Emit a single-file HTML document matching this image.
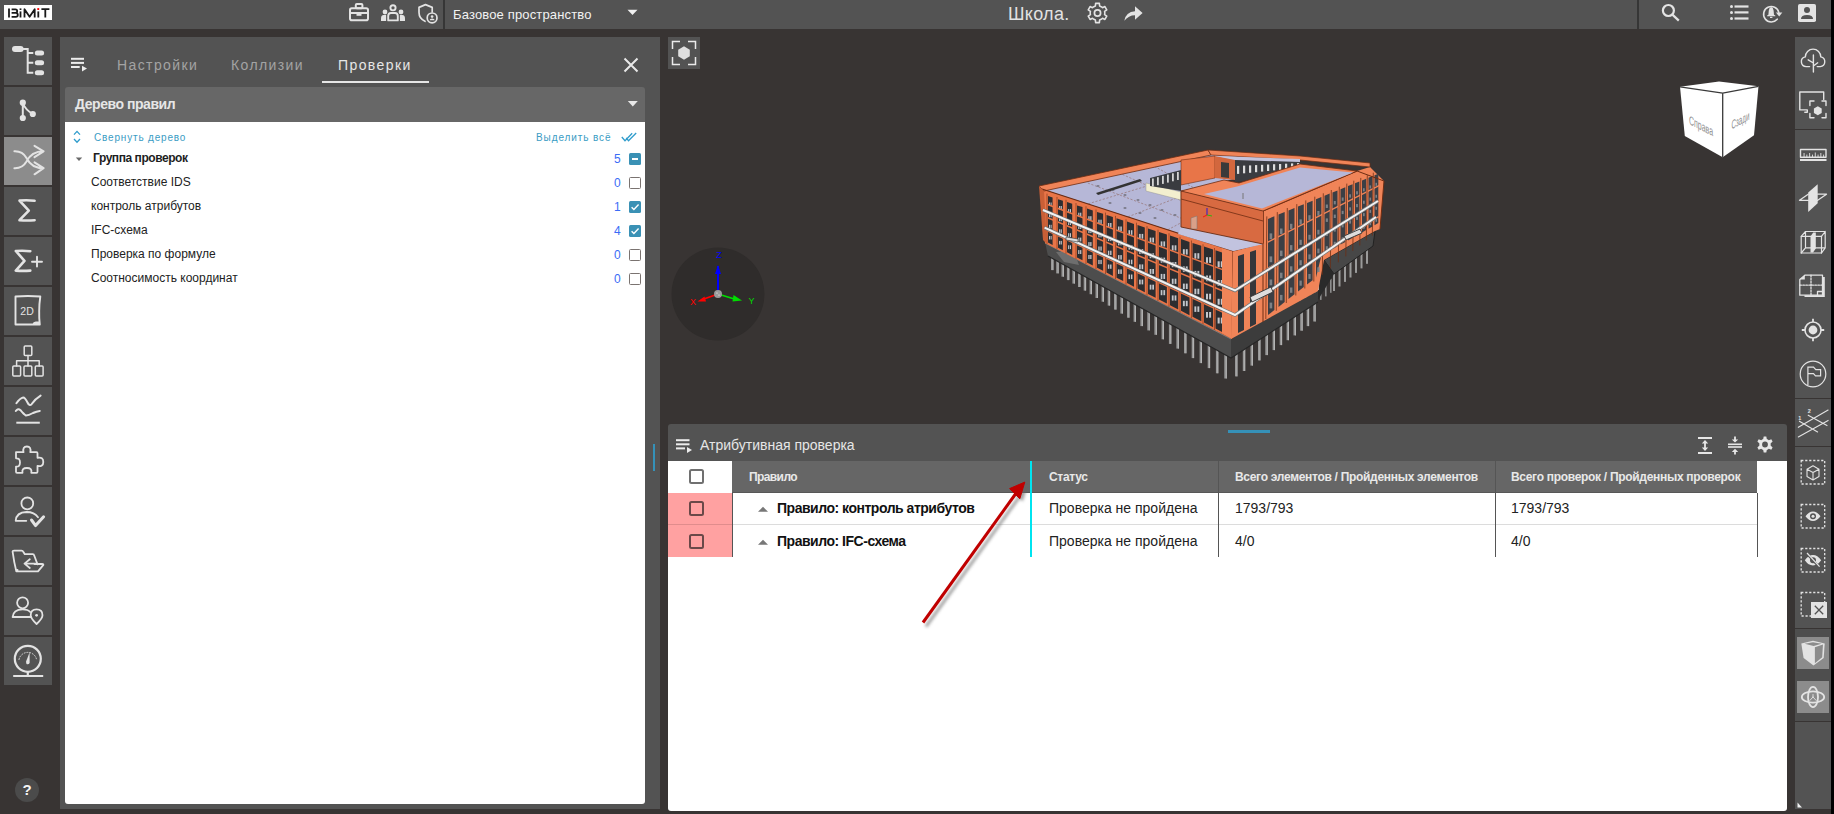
<!DOCTYPE html>
<html><head><meta charset="utf-8">
<style>
*{box-sizing:border-box;margin:0;padding:0}
html,body{width:1834px;height:814px;overflow:hidden;background:#383433;font-family:"Liberation Sans",sans-serif}
.a{position:absolute}
.t{position:absolute;white-space:nowrap}
svg.a{overflow:visible}
#top{left:0;top:0;width:1831px;height:29px;background:#535353}
#rstrip{left:1831px;top:0;width:3px;height:814px;background:#000}
.sb{position:absolute;left:4px;width:48px;height:48px;background:#535353}
.sb svg{position:absolute;left:0;top:0;overflow:visible}
.rs{position:absolute;left:1795px;width:36px;background:#535353}
.ic{fill:none;stroke:#e3e3e3;stroke-linecap:round;stroke-linejoin:round}
.tr{left:91px;font-size:12px;line-height:12px;color:#222}
.num{left:614px;font-size:12px;line-height:12px;color:#3b6cf6}
.cb{position:absolute;left:629px;width:12px;height:12px;border:1.5px solid #7a7370;border-radius:1.5px;background:#fff}
.cbc{position:absolute;left:629px;width:12px;height:12px;border-radius:1.5px;background:#3a91b5}
.th{top:471px;font-size:12px;line-height:12px;font-weight:bold;color:#e8e8e8;letter-spacing:-0.3px}
.td{font-size:14px;line-height:14px;color:#222}
.tdb{font-size:14px;line-height:14px;color:#111;font-weight:bold;letter-spacing:-0.48px}
.tcb{position:absolute;left:689px;width:15px;height:15px;border:2px solid #707070;border-radius:2.5px}
.dash{position:absolute;left:1801px;width:24px;height:24px;border:2px dotted #e0e0e0}
</style></head><body>
<!-- TOP BAR -->
<div id="top" class="a"></div>
<div id="rstrip" class="a"></div>
<div class="a" style="left:4px;top:5px;width:48px;height:15px;background:#fff"></div>
<svg class="a" style="left:4px;top:5px" width="48" height="15" viewBox="0 0 48 15">
 <g fill="none" stroke="#1a1a1a" stroke-width="1.8" stroke-linejoin="round">
  <path d="M5 3.5V12.5"/>
  <path d="M7.6 4.3H11.4Q13.2 4.3 13.2 6.1Q13.2 7.9 11.4 7.9H8M7.6 7.9H11.8Q13.8 7.9 13.8 10Q13.8 11.9 11.8 11.9H7.6"/>
  <path d="M16.5 6.4V12.5"/>
  <path d="M20.5 12.5V4.2L25.6 11.8L30.7 4.2V12.5"/>
  <path d="M34.3 6.4V12.5"/>
  <path d="M37.4 4.2H45.4M41.3 4.2V12.5"/>
 </g>
 <rect x="15.6" y="3.4" width="1.8" height="1.6" fill="#1a1a1a"/>
 <rect x="33.3" y="3.1" width="1.9" height="1.9" fill="#ff0000"/>
</svg>
<div class="a" style="left:443px;top:0;width:1.6px;height:29px;background:#363636"></div>
<div class="a" style="left:1637px;top:0;width:1.6px;height:29px;background:#363636"></div>
<div class="t" style="left:453px;top:8px;font-size:13px;line-height:13px;color:#f2f2f2;letter-spacing:0.15px">Базовое пространство</div>
<svg class="a" style="left:627px;top:9px" width="12" height="7"><path d="M0.5 0.8H10.5L5.5 6Z" fill="#f0f0f0"/></svg>
<div class="t" style="left:1008px;top:4.8px;font-size:18px;line-height:18px;color:#e2e2e2;letter-spacing:0.3px">Школа.</div>
<!-- top icons -->
<svg class="a" style="left:340px;top:0" width="110" height="29" viewBox="0 0 110 29">
 <g class="ic" stroke-width="2">
  <rect x="10" y="8.2" width="18" height="12" rx="1.8"/>
  <rect x="15.8" y="4" width="6.6" height="4.2" rx="1"/>
  <path d="M10 12.9H28"/>
 </g>
 <rect x="16.5" y="12.5" width="5" height="3.3" fill="#e3e3e3"/>
 <g fill="#e3e3e3">
  <circle cx="45" cy="12" r="2.4"/>
  <circle cx="61" cy="12" r="2.4"/>
  <path d="M41 21V18.5Q41 15.3 43.6 15.1H46.1V21Z"/>
  <path d="M65 21V18.5Q65 15.3 62.4 15.1H59.9V21Z"/>
 </g>
 <g class="ic" stroke-width="1.9">
  <circle cx="53" cy="7.8" r="2.6"/>
  <path d="M48.2 20.4V16Q48.2 13 51 13H55Q57.8 13 57.8 16V20.4Z"/>
 </g>
 <g class="ic" stroke-width="1.7">
  <path d="M85.5 4.6L79 7.4V12.6Q79 18.6 85 21.3M85.5 4.6L92.2 7.4V12"/>
  <circle cx="92.1" cy="17.9" r="4.9"/>
 </g>
 <g fill="#e3e3e3">
  <circle cx="92.1" cy="16.6" r="1.3"/>
  <path d="M89.6 20.3Q89.6 18.6 92.1 18.6Q94.6 18.6 94.6 20.3Z"/>
 </g>
</svg>
<svg class="a" style="left:1080px;top:0" width="70" height="29" viewBox="0 0 70 29">
 <path class="ic" stroke-width="1.6" d="M13.85 6.68 L15.37 6.02 L15.63 3.38 L19.37 3.38 L19.63 6.02 L21.15 6.68 L22.48 7.66 L24.90 6.57 L26.77 9.81 L24.61 11.36 L24.80 13.00 L24.61 14.64 L26.77 16.19 L24.90 19.43 L22.48 18.34 L21.15 19.32 L19.63 19.98 L19.37 22.62 L15.63 22.62 L15.37 19.98 L13.85 19.32 L12.52 18.34 L10.10 19.43 L8.23 16.19 L10.39 14.64 L10.20 13.00 L10.39 11.36 L8.23 9.81 L10.10 6.57 L12.52 7.66Z"/>
 <circle class="ic" cx="17.5" cy="13" r="3.1" stroke-width="1.7"/>
 <path fill="#e3e3e3" d="M44.3 20.8Q45.8 11.8 55 11.2V6.2L62.6 13L55 19.8V15.2Q48.5 15.2 44.3 20.8Z"/>
</svg>
<svg class="a" style="left:1630px;top:0" width="200" height="29" viewBox="0 0 200 29">
 <g class="ic" stroke-width="2.2">
  <circle cx="38.4" cy="10.5" r="5.5"/>
  <path d="M42.4 14.6L48.8 20.6" stroke-linecap="butt"/>
 </g>
 <g fill="#e3e3e3">
  <circle cx="101.5" cy="6.5" r="1.5"/><circle cx="101.5" cy="12.4" r="1.5"/><circle cx="101.5" cy="18.5" r="1.5"/>
  <rect x="104.5" y="5.4" width="14" height="2.2"/><rect x="104.5" y="11.3" width="14" height="2.2"/><rect x="104.5" y="17.4" width="14" height="2.2"/>
 </g>
 <path class="ic" stroke-width="1.6" d="M147.2 19.2A7.7 7.7 0 1 1 148.8 12.4"/>
 <path fill="#e3e3e3" d="M145.9 12.6H152.3L149.2 16.4Z"/>
 <path fill="#e3e3e3" d="M141.2 7.1Q143.2 7.6 143.6 10.5L144 14.7L145.3 15.5V16.2H137.1V15.5L138.4 14.7L138.8 10.5Q139.2 7.6 141.2 7.1Z"/>
 <rect x="140" y="16.8" width="2.4" height="1.2" fill="#e3e3e3"/>
 <rect x="168" y="4" width="18" height="18" rx="1.8" fill="#e3e3e3"/>
 <circle cx="177" cy="10" r="3" fill="#535353"/>
 <path fill="#535353" d="M171 19Q171 15 177 15Q183 15 183 19Z"/>
</svg>
<!-- LEFT SIDEBAR -->
<div class="sb" style="top:37px"><svg width="48" height="48">
 <g fill="#e3e3e3"><rect x="8" y="9" width="11.6" height="6" rx="3"/><rect x="30.8" y="13.4" width="9.3" height="5" rx="2.5"/><rect x="30.8" y="23.3" width="9.3" height="5" rx="2.5"/><rect x="30.8" y="33.3" width="9.3" height="5" rx="2.5"/></g>
 <path class="ic" style="stroke-linecap:butt;stroke-linejoin:miter" stroke-width="2"   d="M18 12H23.7V35.8H29.3M23.7 15.9H29.3M23.7 25.8H29.3"/>
</svg></div>
<div class="sb" style="top:87px"><svg width="48" height="48">
 <g fill="#e3e3e3"><circle cx="18.8" cy="15.7" r="3.1"/><circle cx="18.8" cy="31" r="3.1"/><circle cx="28.8" cy="27" r="3.1"/></g>
 <path class="ic" stroke-width="2" d="M18.8 16V31M18.8 16Q21.5 23 28.8 27"/>
</svg></div>
<div class="sb" style="top:137px;background:#8c8c8c"><svg width="48" height="48">
 <path class="ic" stroke-width="2" d="M10.4 14.3Q18.5 14 22.5 21Q27.5 31.2 39.6 31.2M10.4 31.2Q18.5 31.5 22.5 24.5Q27.5 14.3 39.6 14.3M30.5 8.8L39.6 14.3L30.5 20.2M30.5 25.3L39.6 31.2L30.5 37.3"/>
</svg></div>
<div class="sb" style="top:187px"><svg width="48" height="48">
 <path class="ic" stroke-width="2.6" d="M30.6 13.8Q23 12.8 15.5 13.6L24.8 23.6L15.5 33.2Q23 33.8 30.6 33.2"/>
</svg></div>
<div class="sb" style="top:237px"><svg width="48" height="48">
 <path class="ic" stroke-width="2.6" d="M26.3 14.2Q19 13.3 11.8 14L20.5 23.8L11.8 33.6Q19 34.2 26.3 33.6"/>
 <path class="ic" stroke-width="1.9" d="M28 24.7H38M33 19.8V29.5"/>
</svg></div>
<div class="sb" style="top:287px"><svg width="48" height="48">
 <path class="ic" stroke-width="1.9" d="M11.5 9.5Q24 8.6 36.3 9.5Q35.2 17 35.2 24Q35 31 35.8 37.5H11.5Z"/>
 <path fill="#e3e3e3" d="M28.5 37.5Q29 34.8 31.8 34.6H35.5V37.5Z"/>
 <text x="23.2" y="27.8" text-anchor="middle" font-family="Liberation Sans" font-size="10.5" fill="#e3e3e3" letter-spacing="0.3">2D</text>
</svg></div>
<div class="sb" style="top:337px"><svg width="48" height="48">
 <g class="ic" stroke-width="1.5"><rect x="20.2" y="9" width="7.6" height="9.5" rx="1"/><rect x="8.8" y="29" width="7.8" height="10" rx="1"/><rect x="20" y="29" width="7.8" height="10" rx="1"/><rect x="31.3" y="29" width="7.8" height="10" rx="1"/>
 <path d="M24 18.5V29M12.6 29V23.8H35.2V29"/></g>
</svg></div>
<div class="sb" style="top:387px"><svg width="48" height="48">
 <path class="ic" stroke-width="2" d="M12.4 16.2Q16 11 19.2 10.4Q21 10.3 23.5 15.5Q25.5 19.5 27.5 17.3Q31 12 36.6 8.6"/>
 <path class="ic" stroke-width="2" d="M11.8 24Q14 20.8 16.5 23.2Q20 27.5 22 28.6Q24.5 28.5 29 26Q32.5 24.3 35.8 23.9"/>
 <path class="ic" style="stroke-linecap:butt" stroke-width="2"  d="M12.3 35.7H35.8"/>
</svg></div>
<div class="sb" style="top:437px"><svg width="48" height="48">
 <path class="ic" stroke-width="1.8" d="M12 15.2H19.5Q18.3 9.5 22.9 9.5Q27.5 9.5 26.3 15.2H32.5Q33.5 15.2 33.5 16.2V20.8Q39.3 19.7 39.3 24.9Q39.3 30 33.5 29V34.8Q33.5 35.8 32.5 35.8H27.3Q28.3 31 22.9 31Q17.5 31 18.5 35.8H13Q12 35.8 12 34.8V29.6Q16 30 16 25.5Q16 21 12 21.3V16.2Q12 15.2 12 15.2Z"/>
</svg></div>
<div class="sb" style="top:487px"><svg width="48" height="48">
 <circle class="ic" cx="23.3" cy="16.4" r="5.9" stroke-width="1.8"/>
 <path class="ic" stroke-width="1.8" d="M22.3 33.8H11.7Q12.3 25.3 22.5 25Q30.5 25 34 30.2"/>
 <path class="ic" stroke-width="3" d="M27.5 33L31.6 38.6L39.6 29.8"/>
</svg></div>
<div class="sb" style="top:537px"><svg width="48" height="48">
 <path class="ic" stroke-width="1.8" d="M12.3 34.3Q10 25 8.6 14.6Q8.6 13.7 10 13.7H17.5Q18.8 13.7 19.6 15.3L20.8 17.2H28.7Q30 17.2 30.3 18.8L33.5 27.3M12.3 34.3H34M12.3 34.3Q13.2 34.3 13.5 33M34 34.3L39.4 27.8Q39.4 27 38.3 27H30.5"/>
 <path class="ic" stroke-width="1.8" d="M33.6 26.6H20.5M25.8 22.3L20.5 26.6L25.8 31"/>
</svg></div>
<div class="sb" style="top:587px"><svg width="48" height="48">
 <circle class="ic" cx="18.6" cy="15.8" r="5.5" stroke-width="1.8"/>
 <path class="ic" stroke-width="1.8" d="M27 30H8.6Q9.2 22.5 18.6 22.3Q24 22.3 26.2 25"/>
 <path class="ic" stroke-width="1.8" d="M32.6 37Q26.7 31.5 26.7 28.3Q26.7 22.4 32.6 22.4Q38.5 22.4 38.5 28.3Q38.5 31.5 32.6 37Z"/>
 <circle cx="32.6" cy="28.3" r="1.4" fill="#e3e3e3"/>
</svg></div>
<div class="sb" style="top:637px"><svg width="48" height="48">
 <circle class="ic" cx="23.8" cy="21.8" r="13" stroke-width="2.2"/>
 <path class="ic" style="stroke-linecap:butt" stroke-width="2.2"  d="M9.2 39H39.2M23.8 34.8V39"/>
 <path fill="#e3e3e3" d="M22 24.8L25.6 15.3L25.6 26Q24.5 28 22.5 27Z"/>
 <path class="ic" stroke-width="0.9" stroke-dasharray="1 1.8" d="M15 22.5A9 9 0 0 1 32.6 22.5"/>
</svg></div>
<div class="a" style="left:15px;top:778px;width:24px;height:24px;border-radius:50%;background:#4b4b4b"></div>
<div class="t" style="left:15px;top:782px;width:24px;text-align:center;font-size:15px;line-height:15px;font-weight:bold;color:#f4f4f4">?</div>
<!-- LEFT PANEL -->
<div class="a" style="left:60px;top:37px;width:600px;height:772px;background:#535353"></div>
<div class="a" style="left:65px;top:87px;width:580px;height:35px;background:#676767;border-radius:3px 3px 0 0"></div>
<div class="a" style="left:65px;top:122px;width:580px;height:682px;background:#fff;border-radius:0 0 3px 3px"></div>
<svg class="a" style="left:60px;top:40px" width="40" height="40">
 <g fill="#ececec"><rect x="11" y="17.8" width="13" height="2"/><rect x="11" y="21.9" width="13" height="2"/><rect x="11" y="26" width="8.7" height="2"/><path d="M22 25.7L27 28.6L22 31.6Z"/></g>
</svg>
<div class="t" style="left:117px;top:58px;font-size:14px;line-height:14px;letter-spacing:1.4px;color:#a3a3a3">Настройки</div>
<div class="t" style="left:231px;top:58px;font-size:14px;line-height:14px;letter-spacing:1.4px;color:#a3a3a3">Коллизии</div>
<div class="t" style="left:338px;top:58px;font-size:14px;line-height:14px;letter-spacing:1.4px;color:#e6e6e6">Проверки</div>
<div class="a" style="left:322px;top:81px;width:107px;height:2px;background:#e6e6e6"></div>
<svg class="a" style="left:620px;top:54px" width="22" height="22"><path d="M4.5 4.5L17.5 17.5M17.5 4.5L4.5 17.5" stroke="#e8e8e8" stroke-width="2"/></svg>
<div class="t" style="left:75px;top:97px;font-size:14px;line-height:14px;font-weight:bold;color:#e6e6e6;letter-spacing:-0.45px">Дерево правил</div>
<svg class="a" style="left:627px;top:100px" width="12" height="8"><path d="M0.8 1H10.8L5.8 6.5Z" fill="#e8e8e8"/></svg>
<svg class="a" style="left:70px;top:128px" width="14" height="18"><path d="M4 6.6L7 3.4L10 6.6M4 11L7 14.3L10 11" fill="none" stroke="#2f9ccc" stroke-width="1.3"/></svg>
<div class="t" style="left:94px;top:133px;font-size:10px;line-height:10px;letter-spacing:0.82px;color:#3a9cc4">Свернуть дерево</div>
<div class="t" style="left:536px;top:133px;font-size:10px;line-height:10px;letter-spacing:0.9px;color:#3a9cc4">Выделить всё</div>
<svg class="a" style="left:619px;top:130px" width="22" height="14"><path d="M2.8 7L6 10.7L13.2 3.2M7.2 7.9L9.5 10.7L17.2 3" fill="none" stroke="#2f9ccc" stroke-width="1.3"/></svg>
<svg class="a" style="left:74px;top:155px" width="10" height="8"><path d="M1.8 2.5H8.2L5 6Z" fill="#6a6a6a"/></svg>
<div class="t tr" style="left:93px;top:152px;font-weight:bold;letter-spacing:-0.44px;color:#1e1e1e">Группа проверок</div>
<div class="t tr" style="top:176px">Соответствие IDS</div>
<div class="t tr" style="top:200px">контроль атрибутов</div>
<div class="t tr" style="top:224px">IFC-схема</div>
<div class="t tr" style="top:248px">Проверка по формуле</div>
<div class="t tr" style="top:272px">Соотносимость координат</div>
<div class="t num" style="top:153px">5</div>
<div class="t num" style="top:177px">0</div>
<div class="t num" style="top:201px">1</div>
<div class="t num" style="top:225px">4</div>
<div class="t num" style="top:249px">0</div>
<div class="t num" style="top:273px">0</div>
<div class="cbc" style="top:153px"><div class="a" style="left:3px;top:5.3px;width:6px;height:1.6px;background:#fff"></div></div>
<div class="cb" style="top:177px"></div>
<div class="cbc" style="top:201px"><svg class="a" style="left:0;top:0" width="12" height="12"><path d="M2.6 6.2L4.9 8.5L9.6 3.6" fill="none" stroke="#fff" stroke-width="1.4"/></svg></div>
<div class="cbc" style="top:225px"><svg class="a" style="left:0;top:0" width="12" height="12"><path d="M2.6 6.2L4.9 8.5L9.6 3.6" fill="none" stroke="#fff" stroke-width="1.4"/></svg></div>
<div class="cb" style="top:249px"></div>
<div class="cb" style="top:273px"></div>
<div class="a" style="left:653px;top:444px;width:2px;height:27px;background:#3591b8"></div>
<!-- BOTTOM PANEL -->
<div class="a" style="left:668px;top:424px;width:1119px;height:37px;background:#535353;border-radius:3px 3px 0 0"></div>
<div class="a" style="left:668px;top:461px;width:1119px;height:350px;background:#fff;border-radius:0 0 3px 3px"></div>
<div class="a" style="left:1228px;top:430px;width:42px;height:3px;background:#3591b8"></div>
<svg class="a" style="left:668px;top:430px" width="30" height="26">
 <g fill="#ececec"><rect x="8" y="9.2" width="13.5" height="2"/><rect x="8" y="13.3" width="13.5" height="2"/><rect x="8" y="17.4" width="9" height="2"/><path d="M19 17L24 20L19 23Z"/></g>
</svg>
<div class="t" style="left:700px;top:438px;font-size:14px;line-height:14px;color:#e6e6e6">Атрибутивная проверка</div>
<svg class="a" style="left:1690px;top:430px" width="90" height="30">
 <g fill="#e6e6e6">
  <rect x="8" y="7" width="14" height="2"/><rect x="8" y="22" width="14" height="2"/>
  <path d="M15 10L18.2 13.4H15.9V17.6H18.2L15 21L11.8 17.6H14.1V13.4H11.8Z"/>
  <rect x="38" y="13.5" width="14" height="1.6"/><rect x="38" y="16.2" width="14" height="1.6"/>
  <path d="M45 12.6L41.8 9.4H44.1V6.6H45.9V9.4H48.2Z"/><path d="M45 18.7L41.8 21.9H44.1V24.6H45.9V21.9H48.2Z"/>
 </g>
 <path fill="#e6e6e6" fill-rule="evenodd" d="M73.7 6.5H76.3L76.8 9.1Q77.9 9.5 78.8 10.2L81.3 9.3L82.6 11.6L80.6 13.4Q80.8 14.5 80.6 15.6L82.6 17.4L81.3 19.7L78.8 18.8Q77.9 19.5 76.8 19.9L76.3 22.5H73.7L73.2 19.9Q72.1 19.5 71.2 18.8L68.7 19.7L67.4 17.4L69.4 15.6Q69.2 14.5 69.4 13.4L67.4 11.6L68.7 9.3L71.2 10.2Q72.1 9.5 73.2 9.1ZM75 11.6A2.9 2.9 0 1 0 75 17.4A2.9 2.9 0 1 0 75 11.6Z"/>
</svg>
<!-- table -->
<div class="a" style="left:732px;top:461px;width:1025px;height:32px;background:#666"></div>
<div class="a" style="left:732px;top:492px;width:1025px;height:1px;background:#575757"></div>
<div class="a" style="left:668px;top:493px;width:64px;height:64px;background:#ffa1a1"></div>
<div class="a" style="left:668px;top:524px;width:64px;height:1px;background:#e08c8c"></div>
<div class="a" style="left:732px;top:524px;width:1025px;height:1px;background:#dcdcdc"></div>
<div class="a" style="left:732px;top:493px;width:1px;height:64px;background:#555"></div>
<div class="a" style="left:1218px;top:461px;width:1px;height:96px;background:#555"></div>
<div class="a" style="left:1495px;top:461px;width:1px;height:96px;background:#555"></div>
<div class="a" style="left:1757px;top:493px;width:1px;height:64px;background:#555"></div>
<div class="a" style="left:1030px;top:461px;width:2.4px;height:96px;background:#00e4f0"></div>
<div class="tcb" style="top:469px"></div>
<div class="tcb" style="top:501px;border-color:#6a4848"></div>
<div class="tcb" style="top:534px;border-color:#6a4848"></div>
<div class="t th" style="left:749px;letter-spacing:-0.6px">Правило</div>
<div class="t th" style="left:1049px">Статус</div>
<div class="t th" style="left:1235px">Всего элементов / Пройденных элементов</div>
<div class="t th" style="left:1511px">Всего проверок / Пройденных проверок</div>
<svg class="a" style="left:756px;top:504px" width="14" height="9"><path d="M2 7.8H12L7 2.8Z" fill="#777"/></svg>
<svg class="a" style="left:756px;top:537px" width="14" height="9"><path d="M2 7.8H12L7 2.8Z" fill="#777"/></svg>
<div class="t tdb" style="left:777px;top:501px">Правило: контроль атрибутов</div>
<div class="t tdb" style="left:777px;top:534px">Правило: IFC-схема</div>
<div class="t td" style="left:1049px;top:501px">Проверка не пройдена</div>
<div class="t td" style="left:1049px;top:534px">Проверка не пройдена</div>
<div class="t td" style="left:1235px;top:501px">1793/793</div>
<div class="t td" style="left:1235px;top:534px">4/0</div>
<div class="t td" style="left:1511px;top:501px">1793/793</div>
<div class="t td" style="left:1511px;top:534px">4/0</div>
<!-- arrow annotation -->
<svg class="a" style="left:900px;top:470px" width="150" height="170">
 <defs><filter id="sh" x="-50%" y="-50%" width="200%" height="200%"><feGaussianBlur stdDeviation="1.8"/></filter></defs>
 <g transform="translate(3,4)" opacity="0.6" filter="url(#sh)">
  <path d="M23 152.5L115.5 24" stroke="#666" stroke-width="3"/>
  <path d="M124.8 12.1L110.9 19.4L119.8 27.6Z" fill="#666"/>
 </g>
 <path d="M23 152.5L115.5 24" stroke="#c00000" stroke-width="3"/>
 <path d="M124.8 12.1L109.6 18.6L119.8 28.8Z" fill="#c00000" stroke="#c00000" stroke-width="1"/>
</svg>
<!-- RIGHT SIDEBAR -->
<div class="rs" style="top:37px;height:92px"></div>
<div class="rs" style="top:130px;height:268px"></div>
<div class="rs" style="top:399px;height:47px"></div>
<div class="rs" style="top:447px;height:181px"></div>
<div class="rs" style="top:629px;height:92px;background:#4e4e4e"></div>
<div class="rs" style="top:722px;height:87px"></div>
<div class="a" style="left:1797px;top:637px;width:32px;height:32px;background:#8c8c8c"></div>
<div class="a" style="left:1797px;top:681px;width:32px;height:32px;background:#8c8c8c"></div>
<svg class="a" style="left:1795px;top:37px" width="36" height="772" viewBox="0 0 36 772">
 <g class="ic" stroke-width="1.4">
  <!-- cloud tree -->
  <path d="M14.6 29.6H11.2A4.9 4.9 0 0 1 10.3 19.9A7.6 7.6 0 0 1 25.8 19.9A4.9 4.9 0 0 1 25.2 29.6H22.2"/>
  <path d="M18.4 18V35M18.4 26L13.2 22.8M18.4 29L22.7 25.8"/>
  <!-- screen focus -->
  <path d="M12.3 72.9H4.8V55H28.7V62.5M12.3 72.9V75.2H9.8"/>
  <path d="M14.9 68.5V64H19M27 64H31V68.5M14.9 76.5V80.8H19M27 80.8H31V76.5"/>
 </g>
 <path fill="#e3e3e3" d="M22.8 69.3L26.7 71.5V76L22.8 78.2L18.9 76V71.5Z"/>
 <!-- ruler -->
 <g class="ic" stroke-width="1.4"><rect x="5.5" y="112.5" width="25.5" height="7.7"/></g>
 <g fill="#e3e3e3"><rect x="5" y="122" width="26.5" height="2"/>
  <rect x="8.6" y="116" width="0.9" height="4"/><rect x="11.4" y="117.6" width="0.9" height="2.6"/><rect x="14.2" y="116" width="0.9" height="4"/><rect x="17" y="117.6" width="0.9" height="2.6"/><rect x="19.8" y="115.5" width="0.9" height="4.5"/><rect x="22.6" y="117.6" width="0.9" height="2.6"/><rect x="25.4" y="116" width="0.9" height="4"/><rect x="28.2" y="117.6" width="0.9" height="2.6"/></g>
 <!-- section plane -->
 <path fill="#e3e3e3" d="M13.2 155.6L22.7 147.2V166.3L13.2 175Z"/>
 <path class="ic" stroke-width="1.3" d="M4.5 163.3H13.2M22.7 157.2H31.5L22.7 163.3H4.5L13.2 157.2"/>
 <!-- section box -->
 <g class="ic" stroke-width="1.2">
  <path d="M6.2 199.3H26.5V216H6.2Z"/>
  <path d="M6.2 199.3L10.5 194.5H30.2V210.8L26.5 216M26.5 199.3L30.2 194.5M10.5 194.5V210.8H30.2M10.5 210.8L6.2 216"/>
 </g>
 <path fill="#e3e3e3" d="M15.5 199.5L18.2 195.5H20.8V211.5L18 215.5H15.5Z"/>
 <!-- floor plan -->
 <path fill="#e3e3e3" d="M27.5 240H29.8V260H9.5V258.2H27.5Z"/>
 <g class="ic" stroke-width="1.3">
  <path d="M7.5 240.2L9.8 238.2H27.5V258.2H4.8V242.5Z"/>
  <path d="M4.8 248.2H27.5M16 238.2V258.2" stroke-dasharray="1.6 1.4"/>
  <path d="M22.5 258.2V254.5H27.5"/>
 </g>
 <path fill="#e3e3e3" d="M4.8 242.5L9.8 238.2V242.5Z"/>
 <!-- target -->
 <circle class="ic" cx="18" cy="293" r="8" stroke-width="1.6"/>
 <circle cx="18" cy="293" r="4.4" fill="#e3e3e3"/>
 <path class="ic" style="stroke-linecap:butt" stroke-width="1.8"  d="M18 281.8V285M18 301V304.2M6.8 293H10M26 293H29.2"/>
 <!-- flag -->
 <circle class="ic" cx="18" cy="337" r="12.8" stroke-width="1.2"/>
 <path class="ic" style="stroke-linejoin:miter" stroke-width="1.2"  d="M12.9 348V330.2H18.5L20.8 332.6H25.6V338.8H20.5L18.5 336.6H12.9"/>
 <!-- grid 1 2 -->
 <path class="ic" stroke-width="1.1" d="M3.3 390.3L33.1 373.1M3.3 400L33.1 383.4M4.4 384.2L22.6 395M13.2 378.2L32 388.6"/>
 <text x="3.2" y="382.5" font-family="Liberation Sans" font-size="5.5" font-weight="bold" fill="#e3e3e3">1</text>
 <text x="12.8" y="376.3" font-family="Liberation Sans" font-size="5.5" font-weight="bold" fill="#e3e3e3">2</text>
 <!-- dashed boxes -->
 <g class="ic" style="stroke-linecap:butt;stroke-linejoin:miter" stroke-width="1.3" stroke-dasharray="2.2 1.8"  >
  <rect x="6.2" y="423.5" width="23.5" height="23.5"/>
  <rect x="6.2" y="467.5" width="23.5" height="23.5"/>
  <rect x="6.2" y="511.5" width="23.5" height="23.5"/>
  <rect x="6.2" y="555.5" width="23.5" height="23.5"/>
 </g>
 <path class="ic" stroke-width="1.1" d="M18 428.8L24 432.2V439.6L18 443L12 439.6V432.2ZM12 432.2L18 435.6L24 432.2M18 435.6V443"/>
 <path fill="#e3e3e3" fill-rule="evenodd" d="M10.5 479.3Q13.8 474.5 18 474.5Q22.2 474.5 25.5 479.3Q22.2 484 18 484Q13.8 484 10.5 479.3ZM18 476.3A3 3 0 1 0 18 482.3A3 3 0 1 0 18 476.3Z"/>
 <circle cx="18" cy="479.3" r="1.5" fill="#e3e3e3"/>
 <path fill="#e3e3e3" fill-rule="evenodd" d="M9.8 523.2Q13.5 518 18 518Q22.5 518 26.2 523.2Q22.5 528.4 18 528.4Q13.5 528.4 9.8 523.2ZM18 520.2A3 3 0 1 0 18 526.2A3 3 0 1 0 18 520.2Z"/>
 <path stroke="#535353" stroke-width="2.4" d="M12 516.8L24.6 530.5"/>
 <path stroke="#e3e3e3" stroke-width="1.2" d="M12 516L24.6 529.7"/>
 <rect x="16" y="565" width="16" height="16" fill="#e3e3e3"/>
 <path stroke="#535353" stroke-width="1.3" d="M19.8 568.8L28.2 577.2M28.2 568.8L19.8 577.2"/>
 <!-- active cube -->
 <path fill="#e3e3e3" d="M6.3 606.4L18 603.8L29.7 606.4L28.7 621L18.5 628.5L8.6 621Z"/>
 <path fill="#8c8c8c" d="M19.9 610.3L28 607.6L27.2 620.3L19.9 626.2Z"/>
 <path fill="#8c8c8c" d="M9.6 606.7L18 605.2L26.6 606.7L18.6 608.9Z"/>
 <!-- orbit -->
 <g class="ic" stroke-width="1.8">
  <ellipse cx="18" cy="660" rx="11.2" ry="5.6"/>
  <ellipse cx="18" cy="660" rx="5" ry="10.2"/>
 </g>
 <path class="ic" stroke-width="0.9" d="M18 660V657.5M18 660L14.8 663.5M18 660L21.2 663.5"/>
 <!-- resize mark -->
 <path fill="#f0f0f0" d="M2.5 765.5V770.5H7Z"/>
</svg>
<!-- VIEWER -->
<div class="a" style="left:668px;top:37px;width:32px;height:32px;background:#535353"></div>
<svg class="a" style="left:668px;top:37px" width="32" height="32">
 <path d="M4.5 12V4.5H12M20 4.5H27.5V12M4.5 20V27.5H12M20 27.5H27.5V20" fill="none" stroke="#eaeaea" stroke-width="1.5"/>
 <path d="M16 9.3L21.8 12.65V19.35L16 22.7L10.2 19.35V12.65Z" fill="#e0e0e0"/>
</svg>
<!-- axes gizmo -->
<svg class="a" style="left:660px;top:240px" width="120" height="110">
 <circle cx="58" cy="54" r="46.5" fill="#2f2c2b"/>
 <path d="M58 53V26" stroke="#0000ff" stroke-width="2"/>
 <path d="M58 25L55 34H61Z" fill="#0000ff"/>
 <path d="M58 54L41 60" stroke="#ff0000" stroke-width="1.8"/>
 <path d="M37.5 61.5L44.5 56.5L46 61.5Z" fill="#ff0000"/>
 <path d="M58 54L76 59.5" stroke="#00dd00" stroke-width="1.8"/>
 <path d="M82 60.5L73.5 55L72.5 61.5Z" fill="#00dd00"/>
 <circle cx="58" cy="54" r="4" fill="#9a9a9a"/>
 <circle cx="57" cy="53" r="0.6" fill="#fff"/><circle cx="59" cy="55" r="0.6" fill="#fff"/>
 <text x="56.3" y="18" font-family="Liberation Sans" font-size="9" fill="#0000ff">Z</text>
 <text x="30" y="64.5" font-family="Liberation Sans" font-size="9" fill="#ff0000">X</text>
 <text x="88.5" y="64" font-family="Liberation Sans" font-size="9" fill="#00dd00">Y</text>
</svg>
<!-- nav cube -->
<svg class="a" style="left:1670px;top:75px" width="100" height="90">
 <path d="M10 11.8L49 6.4L88.5 11.3L84 60.2L52.7 82.3L14.8 61Z" fill="#ffffff"/>
 <path d="M10 11.8L52.7 18.2L88.5 11.3M52.7 18.2V82.3" fill="none" stroke="#3a3a3a" stroke-width="1.3"/>
 <text x="0" y="0" transform="translate(19,49) skewY(27) scale(0.56,1)" font-family="Liberation Sans" font-size="12.5" fill="#8e8e8e">Справа</text>
 <text x="0" y="0" transform="translate(61.5,54.5) skewY(-29) scale(0.5,1)" font-family="Liberation Sans" font-size="12.5" fill="#8e8e8e">Сзади</text>
</svg>
<svg class="a" style="left:1000px;top:130px" width="420" height="270" viewBox="1000 130 420 270">
<rect x="1051.0" y="256.1" width="2.4" height="14.0" fill="#979797"/>
<rect x="1052.6" y="256.1" width="0.8" height="14.0" fill="#bcbcbc"/>
<rect x="1056.2" y="259.0" width="2.4" height="14.4" fill="#979797"/>
<rect x="1057.8" y="259.0" width="0.8" height="14.4" fill="#bcbcbc"/>
<rect x="1061.5" y="262.0" width="2.4" height="14.7" fill="#979797"/>
<rect x="1063.1" y="262.0" width="0.8" height="14.7" fill="#bcbcbc"/>
<rect x="1066.9" y="265.0" width="2.4" height="15.1" fill="#979797"/>
<rect x="1068.5" y="265.0" width="0.8" height="15.1" fill="#bcbcbc"/>
<rect x="1072.4" y="268.1" width="2.4" height="15.5" fill="#979797"/>
<rect x="1074.0" y="268.1" width="0.8" height="15.5" fill="#bcbcbc"/>
<rect x="1078.0" y="271.2" width="2.4" height="15.8" fill="#979797"/>
<rect x="1079.6" y="271.2" width="0.8" height="15.8" fill="#bcbcbc"/>
<rect x="1083.7" y="274.4" width="2.4" height="16.2" fill="#979797"/>
<rect x="1085.3" y="274.4" width="0.8" height="16.2" fill="#bcbcbc"/>
<rect x="1089.6" y="277.6" width="2.4" height="16.6" fill="#979797"/>
<rect x="1091.2" y="277.6" width="0.8" height="16.6" fill="#bcbcbc"/>
<rect x="1095.5" y="281.0" width="2.4" height="17.0" fill="#979797"/>
<rect x="1097.1" y="281.0" width="0.8" height="17.0" fill="#bcbcbc"/>
<rect x="1101.6" y="284.3" width="2.4" height="17.4" fill="#979797"/>
<rect x="1103.2" y="284.3" width="0.8" height="17.4" fill="#bcbcbc"/>
<rect x="1107.7" y="287.8" width="2.4" height="17.8" fill="#979797"/>
<rect x="1109.3" y="287.8" width="0.8" height="17.8" fill="#bcbcbc"/>
<rect x="1114.0" y="291.3" width="2.4" height="18.3" fill="#979797"/>
<rect x="1115.6" y="291.3" width="0.8" height="18.3" fill="#bcbcbc"/>
<rect x="1120.4" y="294.9" width="2.4" height="18.7" fill="#979797"/>
<rect x="1122.0" y="294.9" width="0.8" height="18.7" fill="#bcbcbc"/>
<rect x="1127.0" y="298.5" width="2.4" height="19.2" fill="#979797"/>
<rect x="1128.6" y="298.5" width="0.8" height="19.2" fill="#bcbcbc"/>
<rect x="1133.6" y="302.2" width="2.4" height="19.6" fill="#979797"/>
<rect x="1135.2" y="302.2" width="0.8" height="19.6" fill="#bcbcbc"/>
<rect x="1140.4" y="306.0" width="2.4" height="20.1" fill="#979797"/>
<rect x="1142.0" y="306.0" width="0.8" height="20.1" fill="#bcbcbc"/>
<rect x="1147.3" y="309.9" width="2.4" height="20.5" fill="#979797"/>
<rect x="1148.9" y="309.9" width="0.8" height="20.5" fill="#bcbcbc"/>
<rect x="1154.4" y="313.8" width="2.4" height="21.0" fill="#979797"/>
<rect x="1156.0" y="313.8" width="0.8" height="21.0" fill="#bcbcbc"/>
<rect x="1161.6" y="317.8" width="2.4" height="21.5" fill="#979797"/>
<rect x="1163.2" y="317.8" width="0.8" height="21.5" fill="#bcbcbc"/>
<rect x="1168.9" y="321.9" width="2.4" height="22.0" fill="#979797"/>
<rect x="1170.5" y="321.9" width="0.8" height="22.0" fill="#bcbcbc"/>
<rect x="1176.4" y="326.1" width="2.4" height="22.5" fill="#979797"/>
<rect x="1178.0" y="326.1" width="0.8" height="22.5" fill="#bcbcbc"/>
<rect x="1184.0" y="330.3" width="2.4" height="23.0" fill="#979797"/>
<rect x="1185.6" y="330.3" width="0.8" height="23.0" fill="#bcbcbc"/>
<rect x="1191.7" y="334.6" width="2.4" height="23.5" fill="#979797"/>
<rect x="1193.3" y="334.6" width="0.8" height="23.5" fill="#bcbcbc"/>
<rect x="1199.6" y="339.0" width="2.4" height="24.1" fill="#979797"/>
<rect x="1201.2" y="339.0" width="0.8" height="24.1" fill="#bcbcbc"/>
<rect x="1207.7" y="343.5" width="2.4" height="24.6" fill="#979797"/>
<rect x="1209.3" y="343.5" width="0.8" height="24.6" fill="#bcbcbc"/>
<rect x="1215.9" y="348.1" width="2.4" height="25.2" fill="#979797"/>
<rect x="1217.5" y="348.1" width="0.8" height="25.2" fill="#bcbcbc"/>
<rect x="1224.3" y="352.8" width="2.4" height="25.7" fill="#979797"/>
<rect x="1225.9" y="352.8" width="0.8" height="25.7" fill="#bcbcbc"/>
<rect x="1235.0" y="352.4" width="2.4" height="24.0" fill="#979797"/>
<rect x="1236.6" y="352.4" width="0.8" height="24.0" fill="#bcbcbc"/>
<rect x="1242.8" y="347.5" width="2.4" height="23.5" fill="#979797"/>
<rect x="1244.4" y="347.5" width="0.8" height="23.5" fill="#bcbcbc"/>
<rect x="1250.5" y="342.6" width="2.4" height="23.0" fill="#979797"/>
<rect x="1252.1" y="342.6" width="0.8" height="23.0" fill="#bcbcbc"/>
<rect x="1258.0" y="337.8" width="2.4" height="22.6" fill="#979797"/>
<rect x="1259.6" y="337.8" width="0.8" height="22.6" fill="#bcbcbc"/>
<rect x="1265.3" y="333.0" width="2.4" height="22.1" fill="#979797"/>
<rect x="1266.9" y="333.0" width="0.8" height="22.1" fill="#bcbcbc"/>
<rect x="1272.6" y="328.4" width="2.4" height="21.7" fill="#979797"/>
<rect x="1274.2" y="328.4" width="0.8" height="21.7" fill="#bcbcbc"/>
<rect x="1279.7" y="323.9" width="2.4" height="21.2" fill="#979797"/>
<rect x="1281.3" y="323.9" width="0.8" height="21.2" fill="#bcbcbc"/>
<rect x="1286.6" y="319.4" width="2.4" height="20.8" fill="#979797"/>
<rect x="1288.2" y="319.4" width="0.8" height="20.8" fill="#bcbcbc"/>
<rect x="1293.5" y="315.1" width="2.4" height="20.3" fill="#979797"/>
<rect x="1295.1" y="315.1" width="0.8" height="20.3" fill="#bcbcbc"/>
<rect x="1300.2" y="310.8" width="2.4" height="19.9" fill="#979797"/>
<rect x="1301.8" y="310.8" width="0.8" height="19.9" fill="#bcbcbc"/>
<rect x="1306.7" y="306.6" width="2.4" height="19.5" fill="#979797"/>
<rect x="1308.3" y="306.6" width="0.8" height="19.5" fill="#bcbcbc"/>
<rect x="1313.2" y="302.4" width="2.4" height="19.1" fill="#979797"/>
<rect x="1314.8" y="302.4" width="0.8" height="19.1" fill="#bcbcbc"/>
<rect x="1333.0" y="273.0" width="2" height="18.0" fill="#9a9a9a"/>
<rect x="1338.5" y="269.1" width="2" height="17.4" fill="#9a9a9a"/>
<rect x="1344.0" y="265.1" width="2" height="16.8" fill="#9a9a9a"/>
<rect x="1349.5" y="261.2" width="2" height="16.3" fill="#9a9a9a"/>
<rect x="1355.0" y="257.2" width="2" height="15.7" fill="#9a9a9a"/>
<rect x="1360.5" y="253.3" width="2" height="15.1" fill="#9a9a9a"/>
<rect x="1366.0" y="249.3" width="2" height="14.5" fill="#9a9a9a"/>
<rect x="1300" y="300.0" width="1.6" height="14" fill="#8c8c8c"/>
<rect x="1305" y="296.5" width="1.6" height="14" fill="#8c8c8c"/>
<rect x="1310" y="292.9" width="1.6" height="14" fill="#8c8c8c"/>
<rect x="1315" y="289.4" width="1.6" height="14" fill="#8c8c8c"/>
<rect x="1320" y="285.9" width="1.6" height="14" fill="#8c8c8c"/>
<rect x="1325" y="282.4" width="1.6" height="14" fill="#8c8c8c"/>
<rect x="1330" y="278.8" width="1.6" height="14" fill="#8c8c8c"/>
<polygon points="1045.0,242.0 1231.0,338.0 1231.0,358.0 1048.0,256.0" fill="#4d4d4d"/>
<polygon points="1231.0,338.0 1318.0,291.0 1318.0,302.0 1231.0,358.0" fill="#3c3c3c"/>
<polyline points="1048.0,256.0 1231.0,358.0 1318.0,302.0" fill="none" stroke="#262626" stroke-width="1.2"/>
<polyline points="1045.0,243.0 1231.0,339.0" fill="none" stroke="#7a7a7a" stroke-width="1"/>
<polygon points="1056.0,252.0 1074.0,251.0 1079.0,265.0 1064.0,262.0" fill="#6e6e6e"/>
<polygon points="1324.0,260.0 1375.0,231.0 1373.0,246.0 1334.0,274.0" fill="#474747" stroke="#222" stroke-width="1"/>
<polygon points="1318.0,262.0 1324.0,260.0 1334.0,274.0 1318.0,300.0" fill="#2a2a2a"/>
<rect x="1314" y="268" width="5" height="22" fill="#b8b8b0"/>
<polygon points="1042.0,189.0 1233.0,251.0 1232.0,339.0 1045.0,243.0" fill="#e87548"/>
<polygon points="1048.0,195.9 1052.6,197.4 1052.6,244.9 1048.0,242.5" fill="#2c2d30"/>
<rect x="1049.0" y="202.5" width="1.0" height="3.5" fill="#c4c7cc"/>
<rect x="1050.6" y="202.5" width="1.0" height="3.5" fill="#c4c7cc"/>
<rect x="1049.0" y="213.7" width="1.0" height="3.5" fill="#c4c7cc"/>
<rect x="1050.6" y="213.7" width="1.0" height="3.5" fill="#c4c7cc"/>
<rect x="1049.0" y="224.8" width="1.0" height="3.5" fill="#c4c7cc"/>
<rect x="1050.6" y="224.8" width="1.0" height="3.5" fill="#c4c7cc"/>
<rect x="1049.0" y="236.0" width="1.0" height="3.5" fill="#c4c7cc"/>
<rect x="1050.6" y="236.0" width="1.0" height="3.5" fill="#c4c7cc"/>
<polygon points="1058.0,199.2 1062.9,200.8 1062.9,250.2 1058.0,247.7" fill="#2c2d30"/>
<rect x="1059.1" y="206.0" width="1.1" height="3.6" fill="#c4c7cc"/>
<rect x="1060.7" y="206.0" width="1.1" height="3.6" fill="#c4c7cc"/>
<rect x="1059.1" y="217.6" width="1.1" height="3.6" fill="#c4c7cc"/>
<rect x="1060.7" y="217.6" width="1.1" height="3.6" fill="#c4c7cc"/>
<rect x="1059.1" y="229.3" width="1.1" height="3.6" fill="#c4c7cc"/>
<rect x="1060.7" y="229.3" width="1.1" height="3.6" fill="#c4c7cc"/>
<rect x="1059.1" y="240.9" width="1.1" height="3.6" fill="#c4c7cc"/>
<rect x="1060.7" y="240.9" width="1.1" height="3.6" fill="#c4c7cc"/>
<polygon points="1067.0,202.1 1072.2,203.8 1072.2,255.0 1067.0,252.3" fill="#2c2d30"/>
<rect x="1068.1" y="209.1" width="1.1" height="3.8" fill="#c4c7cc"/>
<rect x="1069.9" y="209.1" width="1.1" height="3.8" fill="#c4c7cc"/>
<rect x="1068.1" y="221.2" width="1.1" height="3.8" fill="#c4c7cc"/>
<rect x="1069.9" y="221.2" width="1.1" height="3.8" fill="#c4c7cc"/>
<rect x="1068.1" y="233.2" width="1.1" height="3.8" fill="#c4c7cc"/>
<rect x="1069.9" y="233.2" width="1.1" height="3.8" fill="#c4c7cc"/>
<rect x="1068.1" y="245.3" width="1.1" height="3.8" fill="#c4c7cc"/>
<rect x="1069.9" y="245.3" width="1.1" height="3.8" fill="#c4c7cc"/>
<polygon points="1077.0,205.4 1082.5,207.1 1082.5,260.3 1077.0,257.4" fill="#2c2d30"/>
<rect x="1078.2" y="212.7" width="1.2" height="3.9" fill="#c4c7cc"/>
<rect x="1080.1" y="212.7" width="1.2" height="3.9" fill="#c4c7cc"/>
<rect x="1078.2" y="225.1" width="1.2" height="3.9" fill="#c4c7cc"/>
<rect x="1080.1" y="225.1" width="1.2" height="3.9" fill="#c4c7cc"/>
<rect x="1078.2" y="237.6" width="1.2" height="3.9" fill="#c4c7cc"/>
<rect x="1080.1" y="237.6" width="1.2" height="3.9" fill="#c4c7cc"/>
<rect x="1078.2" y="250.1" width="1.2" height="3.9" fill="#c4c7cc"/>
<rect x="1080.1" y="250.1" width="1.2" height="3.9" fill="#c4c7cc"/>
<polygon points="1087.0,208.6 1092.8,210.5 1092.8,265.5 1087.0,262.6" fill="#2c2d30"/>
<rect x="1088.3" y="216.2" width="1.3" height="4.0" fill="#c4c7cc"/>
<rect x="1090.2" y="216.2" width="1.3" height="4.0" fill="#c4c7cc"/>
<rect x="1088.3" y="229.1" width="1.3" height="4.0" fill="#c4c7cc"/>
<rect x="1090.2" y="229.1" width="1.3" height="4.0" fill="#c4c7cc"/>
<rect x="1088.3" y="242.1" width="1.3" height="4.0" fill="#c4c7cc"/>
<rect x="1090.2" y="242.1" width="1.3" height="4.0" fill="#c4c7cc"/>
<rect x="1088.3" y="255.0" width="1.3" height="4.0" fill="#c4c7cc"/>
<rect x="1090.2" y="255.0" width="1.3" height="4.0" fill="#c4c7cc"/>
<polygon points="1097.0,211.9 1103.1,213.8 1103.1,270.8 1097.0,267.7" fill="#2c2d30"/>
<rect x="1098.3" y="219.7" width="1.3" height="4.2" fill="#c4c7cc"/>
<rect x="1100.4" y="219.7" width="1.3" height="4.2" fill="#c4c7cc"/>
<rect x="1098.3" y="233.1" width="1.3" height="4.2" fill="#c4c7cc"/>
<rect x="1100.4" y="233.1" width="1.3" height="4.2" fill="#c4c7cc"/>
<rect x="1098.3" y="246.5" width="1.3" height="4.2" fill="#c4c7cc"/>
<rect x="1100.4" y="246.5" width="1.3" height="4.2" fill="#c4c7cc"/>
<rect x="1098.3" y="259.9" width="1.3" height="4.2" fill="#c4c7cc"/>
<rect x="1100.4" y="259.9" width="1.3" height="4.2" fill="#c4c7cc"/>
<polygon points="1106.5,214.9 1112.9,217.0 1112.9,275.9 1106.5,272.6" fill="#2c2d30"/>
<rect x="1107.9" y="223.0" width="1.4" height="4.3" fill="#c4c7cc"/>
<rect x="1110.1" y="223.0" width="1.4" height="4.3" fill="#c4c7cc"/>
<rect x="1107.9" y="236.8" width="1.4" height="4.3" fill="#c4c7cc"/>
<rect x="1110.1" y="236.8" width="1.4" height="4.3" fill="#c4c7cc"/>
<rect x="1107.9" y="250.7" width="1.4" height="4.3" fill="#c4c7cc"/>
<rect x="1110.1" y="250.7" width="1.4" height="4.3" fill="#c4c7cc"/>
<rect x="1107.9" y="264.5" width="1.4" height="4.3" fill="#c4c7cc"/>
<rect x="1110.1" y="264.5" width="1.4" height="4.3" fill="#c4c7cc"/>
<polygon points="1116.5,218.2 1123.2,220.4 1123.2,281.1 1116.5,277.7" fill="#2c2d30"/>
<rect x="1118.0" y="226.5" width="1.5" height="4.5" fill="#c4c7cc"/>
<rect x="1120.3" y="226.5" width="1.5" height="4.5" fill="#c4c7cc"/>
<rect x="1118.0" y="240.8" width="1.5" height="4.5" fill="#c4c7cc"/>
<rect x="1120.3" y="240.8" width="1.5" height="4.5" fill="#c4c7cc"/>
<rect x="1118.0" y="255.1" width="1.5" height="4.5" fill="#c4c7cc"/>
<rect x="1120.3" y="255.1" width="1.5" height="4.5" fill="#c4c7cc"/>
<rect x="1118.0" y="269.4" width="1.5" height="4.5" fill="#c4c7cc"/>
<rect x="1120.3" y="269.4" width="1.5" height="4.5" fill="#c4c7cc"/>
<polygon points="1127.0,221.6 1134.0,223.9 1134.0,286.7 1127.0,283.1" fill="#2c2d30"/>
<rect x="1128.5" y="230.2" width="1.5" height="4.6" fill="#c4c7cc"/>
<rect x="1130.9" y="230.2" width="1.5" height="4.6" fill="#c4c7cc"/>
<rect x="1128.5" y="245.0" width="1.5" height="4.6" fill="#c4c7cc"/>
<rect x="1130.9" y="245.0" width="1.5" height="4.6" fill="#c4c7cc"/>
<rect x="1128.5" y="259.7" width="1.5" height="4.6" fill="#c4c7cc"/>
<rect x="1130.9" y="259.7" width="1.5" height="4.6" fill="#c4c7cc"/>
<rect x="1128.5" y="274.5" width="1.5" height="4.6" fill="#c4c7cc"/>
<rect x="1130.9" y="274.5" width="1.5" height="4.6" fill="#c4c7cc"/>
<polygon points="1137.5,225.0 1144.8,227.4 1144.8,292.2 1137.5,288.5" fill="#2c2d30"/>
<rect x="1139.1" y="233.9" width="1.6" height="4.8" fill="#c4c7cc"/>
<rect x="1141.6" y="233.9" width="1.6" height="4.8" fill="#c4c7cc"/>
<rect x="1139.1" y="249.1" width="1.6" height="4.8" fill="#c4c7cc"/>
<rect x="1141.6" y="249.1" width="1.6" height="4.8" fill="#c4c7cc"/>
<rect x="1139.1" y="264.4" width="1.6" height="4.8" fill="#c4c7cc"/>
<rect x="1141.6" y="264.4" width="1.6" height="4.8" fill="#c4c7cc"/>
<rect x="1139.1" y="279.6" width="1.6" height="4.8" fill="#c4c7cc"/>
<rect x="1141.6" y="279.6" width="1.6" height="4.8" fill="#c4c7cc"/>
<polygon points="1148.0,228.4 1155.6,230.9 1155.6,297.8 1148.0,293.9" fill="#2c2d30"/>
<rect x="1149.7" y="237.6" width="1.7" height="4.9" fill="#c4c7cc"/>
<rect x="1152.3" y="237.6" width="1.7" height="4.9" fill="#c4c7cc"/>
<rect x="1149.7" y="253.3" width="1.7" height="4.9" fill="#c4c7cc"/>
<rect x="1152.3" y="253.3" width="1.7" height="4.9" fill="#c4c7cc"/>
<rect x="1149.7" y="269.0" width="1.7" height="4.9" fill="#c4c7cc"/>
<rect x="1152.3" y="269.0" width="1.7" height="4.9" fill="#c4c7cc"/>
<rect x="1149.7" y="284.7" width="1.7" height="4.9" fill="#c4c7cc"/>
<rect x="1152.3" y="284.7" width="1.7" height="4.9" fill="#c4c7cc"/>
<polygon points="1159.0,232.0 1166.9,234.5 1166.9,303.6 1159.0,299.5" fill="#2c2d30"/>
<rect x="1160.7" y="241.4" width="1.7" height="5.1" fill="#c4c7cc"/>
<rect x="1163.4" y="241.4" width="1.7" height="5.1" fill="#c4c7cc"/>
<rect x="1160.7" y="257.6" width="1.7" height="5.1" fill="#c4c7cc"/>
<rect x="1163.4" y="257.6" width="1.7" height="5.1" fill="#c4c7cc"/>
<rect x="1160.7" y="273.9" width="1.7" height="5.1" fill="#c4c7cc"/>
<rect x="1163.4" y="273.9" width="1.7" height="5.1" fill="#c4c7cc"/>
<rect x="1160.7" y="290.1" width="1.7" height="5.1" fill="#c4c7cc"/>
<rect x="1163.4" y="290.1" width="1.7" height="5.1" fill="#c4c7cc"/>
<polygon points="1170.0,235.5 1178.2,238.2 1178.2,309.4 1170.0,305.2" fill="#2c2d30"/>
<rect x="1171.8" y="245.3" width="1.8" height="5.2" fill="#c4c7cc"/>
<rect x="1174.6" y="245.3" width="1.8" height="5.2" fill="#c4c7cc"/>
<rect x="1171.8" y="262.0" width="1.8" height="5.2" fill="#c4c7cc"/>
<rect x="1174.6" y="262.0" width="1.8" height="5.2" fill="#c4c7cc"/>
<rect x="1171.8" y="278.7" width="1.8" height="5.2" fill="#c4c7cc"/>
<rect x="1174.6" y="278.7" width="1.8" height="5.2" fill="#c4c7cc"/>
<rect x="1171.8" y="295.4" width="1.8" height="5.2" fill="#c4c7cc"/>
<rect x="1174.6" y="295.4" width="1.8" height="5.2" fill="#c4c7cc"/>
<polygon points="1181.0,239.1 1189.5,241.9 1189.5,315.2 1181.0,310.8" fill="#2c2d30"/>
<rect x="1182.9" y="249.2" width="1.9" height="5.4" fill="#c4c7cc"/>
<rect x="1185.8" y="249.2" width="1.9" height="5.4" fill="#c4c7cc"/>
<rect x="1182.9" y="266.4" width="1.9" height="5.4" fill="#c4c7cc"/>
<rect x="1185.8" y="266.4" width="1.9" height="5.4" fill="#c4c7cc"/>
<rect x="1182.9" y="283.6" width="1.9" height="5.4" fill="#c4c7cc"/>
<rect x="1185.8" y="283.6" width="1.9" height="5.4" fill="#c4c7cc"/>
<rect x="1182.9" y="300.8" width="1.9" height="5.4" fill="#c4c7cc"/>
<rect x="1185.8" y="300.8" width="1.9" height="5.4" fill="#c4c7cc"/>
<polygon points="1192.5,242.9 1201.3,245.7 1201.3,321.2 1192.5,316.7" fill="#2c2d30"/>
<rect x="1194.4" y="253.2" width="1.9" height="5.5" fill="#c4c7cc"/>
<rect x="1197.4" y="253.2" width="1.9" height="5.5" fill="#c4c7cc"/>
<rect x="1194.4" y="270.9" width="1.9" height="5.5" fill="#c4c7cc"/>
<rect x="1197.4" y="270.9" width="1.9" height="5.5" fill="#c4c7cc"/>
<rect x="1194.4" y="288.7" width="1.9" height="5.5" fill="#c4c7cc"/>
<rect x="1197.4" y="288.7" width="1.9" height="5.5" fill="#c4c7cc"/>
<rect x="1194.4" y="306.4" width="1.9" height="5.5" fill="#c4c7cc"/>
<rect x="1197.4" y="306.4" width="1.9" height="5.5" fill="#c4c7cc"/>
<polygon points="1204.0,246.6 1213.1,249.5 1213.1,327.3 1204.0,322.6" fill="#2c2d30"/>
<rect x="1206.0" y="257.2" width="2.0" height="5.7" fill="#c4c7cc"/>
<rect x="1209.1" y="257.2" width="2.0" height="5.7" fill="#c4c7cc"/>
<rect x="1206.0" y="275.5" width="2.0" height="5.7" fill="#c4c7cc"/>
<rect x="1209.1" y="275.5" width="2.0" height="5.7" fill="#c4c7cc"/>
<rect x="1206.0" y="293.7" width="2.0" height="5.7" fill="#c4c7cc"/>
<rect x="1209.1" y="293.7" width="2.0" height="5.7" fill="#c4c7cc"/>
<rect x="1206.0" y="312.0" width="2.0" height="5.7" fill="#c4c7cc"/>
<rect x="1209.1" y="312.0" width="2.0" height="5.7" fill="#c4c7cc"/>
<polygon points="1215.5,250.3 1224.9,253.4 1224.9,333.4 1215.5,328.5" fill="#2c2d30"/>
<rect x="1217.6" y="261.3" width="2.1" height="5.9" fill="#c4c7cc"/>
<rect x="1220.8" y="261.3" width="2.1" height="5.9" fill="#c4c7cc"/>
<rect x="1217.6" y="280.0" width="2.1" height="5.9" fill="#c4c7cc"/>
<rect x="1220.8" y="280.0" width="2.1" height="5.9" fill="#c4c7cc"/>
<rect x="1217.6" y="298.8" width="2.1" height="5.9" fill="#c4c7cc"/>
<rect x="1220.8" y="298.8" width="2.1" height="5.9" fill="#c4c7cc"/>
<rect x="1217.6" y="317.6" width="2.1" height="5.9" fill="#c4c7cc"/>
<rect x="1220.8" y="317.6" width="2.1" height="5.9" fill="#c4c7cc"/>
<line x1="1042.8" y1="202.8" x2="1232.7" y2="273.4" stroke="#e87548" stroke-width="1.5"/>
<line x1="1043.5" y1="216.0" x2="1232.5" y2="295.0" stroke="#e87548" stroke-width="1.5"/>
<line x1="1044.2" y1="229.2" x2="1232.3" y2="316.6" stroke="#e87548" stroke-width="1.5"/>
<line x1="1047.0" y1="193.6" x2="1047.0" y2="244.0" stroke="#6e2c12" stroke-width="0.8" opacity="0.7"/>
<line x1="1057.0" y1="196.9" x2="1057.0" y2="249.2" stroke="#6e2c12" stroke-width="0.8" opacity="0.7"/>
<line x1="1066.0" y1="199.8" x2="1066.0" y2="253.8" stroke="#6e2c12" stroke-width="0.8" opacity="0.7"/>
<line x1="1076.0" y1="203.0" x2="1076.0" y2="258.9" stroke="#6e2c12" stroke-width="0.8" opacity="0.7"/>
<line x1="1086.0" y1="206.3" x2="1086.0" y2="264.0" stroke="#6e2c12" stroke-width="0.8" opacity="0.7"/>
<line x1="1096.0" y1="209.5" x2="1096.0" y2="269.2" stroke="#6e2c12" stroke-width="0.8" opacity="0.7"/>
<line x1="1105.5" y1="212.6" x2="1105.5" y2="274.1" stroke="#6e2c12" stroke-width="0.8" opacity="0.7"/>
<line x1="1115.5" y1="215.9" x2="1115.5" y2="279.2" stroke="#6e2c12" stroke-width="0.8" opacity="0.7"/>
<line x1="1126.0" y1="219.3" x2="1126.0" y2="284.6" stroke="#6e2c12" stroke-width="0.8" opacity="0.7"/>
<line x1="1136.5" y1="222.7" x2="1136.5" y2="290.0" stroke="#6e2c12" stroke-width="0.8" opacity="0.7"/>
<line x1="1147.0" y1="226.1" x2="1147.0" y2="295.4" stroke="#6e2c12" stroke-width="0.8" opacity="0.7"/>
<line x1="1158.0" y1="229.7" x2="1158.0" y2="301.0" stroke="#6e2c12" stroke-width="0.8" opacity="0.7"/>
<line x1="1169.0" y1="233.2" x2="1169.0" y2="306.7" stroke="#6e2c12" stroke-width="0.8" opacity="0.7"/>
<line x1="1180.0" y1="236.8" x2="1180.0" y2="312.3" stroke="#6e2c12" stroke-width="0.8" opacity="0.7"/>
<line x1="1191.5" y1="240.5" x2="1191.5" y2="318.2" stroke="#6e2c12" stroke-width="0.8" opacity="0.7"/>
<line x1="1203.0" y1="244.3" x2="1203.0" y2="324.1" stroke="#6e2c12" stroke-width="0.8" opacity="0.7"/>
<line x1="1214.5" y1="248.0" x2="1214.5" y2="330.0" stroke="#6e2c12" stroke-width="0.8" opacity="0.7"/>
<polygon points="1222.0,248.0 1233.0,251.0 1232.0,339.0 1222.0,333.0" fill="#f08458"/>
<line x1="1233" y1="251" x2="1232" y2="339" stroke="#6e2c12" stroke-width="1"/>
<polygon points="1233.0,251.0 1263.0,243.0 1263.0,211.0 1357.0,171.0 1370.0,167.0 1384.0,181.0 1380.0,229.0 1375.0,231.0 1324.0,260.0 1318.0,291.0 1231.0,339.0" fill="#f08458"/>
<polygon points="1268.0,218.9 1274.4,216.3 1274.4,310.1 1268.0,315.1" fill="#3b3f45"/>
<rect x="1269.6" y="233.4" width="2.6" height="5.8" fill="#7d8186"/>
<rect x="1269.6" y="256.4" width="2.6" height="5.8" fill="#7d8186"/>
<rect x="1269.6" y="279.5" width="2.6" height="5.8" fill="#7d8186"/>
<rect x="1269.6" y="302.6" width="2.6" height="5.8" fill="#7d8186"/>
<polygon points="1278.5,214.6 1284.7,212.1 1284.7,302.0 1278.5,306.9" fill="#3b3f45"/>
<rect x="1280.0" y="228.5" width="2.5" height="5.5" fill="#7d8186"/>
<rect x="1280.0" y="250.6" width="2.5" height="5.5" fill="#7d8186"/>
<rect x="1280.0" y="272.7" width="2.5" height="5.5" fill="#7d8186"/>
<rect x="1280.0" y="294.9" width="2.5" height="5.5" fill="#7d8186"/>
<polygon points="1288.5,210.5 1294.5,208.1 1294.5,294.3 1288.5,299.0" fill="#3b3f45"/>
<rect x="1290.0" y="223.8" width="2.4" height="5.3" fill="#7d8186"/>
<rect x="1290.0" y="245.1" width="2.4" height="5.3" fill="#7d8186"/>
<rect x="1290.0" y="266.3" width="2.4" height="5.3" fill="#7d8186"/>
<rect x="1290.0" y="287.5" width="2.4" height="5.3" fill="#7d8186"/>
<polygon points="1298.0,206.6 1303.8,204.3 1303.8,287.1 1298.0,291.6" fill="#3b3f45"/>
<rect x="1299.5" y="219.4" width="2.3" height="5.1" fill="#7d8186"/>
<rect x="1299.5" y="239.8" width="2.3" height="5.1" fill="#7d8186"/>
<rect x="1299.5" y="260.2" width="2.3" height="5.1" fill="#7d8186"/>
<rect x="1299.5" y="280.6" width="2.3" height="5.1" fill="#7d8186"/>
<polygon points="1307.0,202.9 1312.6,200.7 1312.6,280.2 1307.0,284.6" fill="#3b3f45"/>
<rect x="1308.4" y="215.2" width="2.2" height="4.9" fill="#7d8186"/>
<rect x="1308.4" y="234.8" width="2.2" height="4.9" fill="#7d8186"/>
<rect x="1308.4" y="254.4" width="2.2" height="4.9" fill="#7d8186"/>
<rect x="1308.4" y="274.0" width="2.2" height="4.9" fill="#7d8186"/>
<polygon points="1316.0,199.3 1321.4,197.0 1321.4,255.5 1316.0,277.5" fill="#3b3f45"/>
<rect x="1317.3" y="211.0" width="2.2" height="4.7" fill="#7d8186"/>
<rect x="1317.3" y="229.8" width="2.2" height="4.7" fill="#7d8186"/>
<rect x="1317.3" y="248.6" width="2.2" height="4.7" fill="#7d8186"/>
<rect x="1317.3" y="267.3" width="2.2" height="4.7" fill="#7d8186"/>
<polygon points="1324.5,195.8 1329.7,193.6 1329.7,250.8 1324.5,253.7" fill="#3b3f45"/>
<rect x="1325.8" y="204.5" width="2.1" height="3.5" fill="#7d8186"/>
<rect x="1325.8" y="218.4" width="2.1" height="3.5" fill="#7d8186"/>
<rect x="1325.8" y="232.3" width="2.1" height="3.5" fill="#7d8186"/>
<rect x="1325.8" y="246.2" width="2.1" height="3.5" fill="#7d8186"/>
<polygon points="1332.5,192.5 1337.5,190.4 1337.5,246.3 1332.5,249.2" fill="#3b3f45"/>
<rect x="1333.8" y="201.0" width="2.0" height="3.4" fill="#7d8186"/>
<rect x="1333.8" y="214.6" width="2.0" height="3.4" fill="#7d8186"/>
<rect x="1333.8" y="228.2" width="2.0" height="3.4" fill="#7d8186"/>
<rect x="1333.8" y="241.8" width="2.0" height="3.4" fill="#7d8186"/>
<polygon points="1340.5,189.2 1345.3,187.2 1345.3,241.9 1340.5,244.6" fill="#3b3f45"/>
<rect x="1341.7" y="197.5" width="1.9" height="3.3" fill="#7d8186"/>
<rect x="1341.7" y="210.8" width="1.9" height="3.3" fill="#7d8186"/>
<rect x="1341.7" y="224.1" width="1.9" height="3.3" fill="#7d8186"/>
<rect x="1341.7" y="237.4" width="1.9" height="3.3" fill="#7d8186"/>
<polygon points="1348.0,186.1 1352.6,184.2 1352.6,237.7 1348.0,240.4" fill="#3b3f45"/>
<rect x="1349.2" y="194.3" width="1.8" height="3.3" fill="#7d8186"/>
<rect x="1349.2" y="207.3" width="1.8" height="3.3" fill="#7d8186"/>
<rect x="1349.2" y="220.3" width="1.8" height="3.3" fill="#7d8186"/>
<rect x="1349.2" y="233.3" width="1.8" height="3.3" fill="#7d8186"/>
<polygon points="1355.0,183.3 1359.4,181.5 1359.4,233.9 1355.0,236.4" fill="#3b3f45"/>
<rect x="1356.1" y="191.2" width="1.8" height="3.2" fill="#7d8186"/>
<rect x="1356.1" y="204.0" width="1.8" height="3.2" fill="#7d8186"/>
<rect x="1356.1" y="216.7" width="1.8" height="3.2" fill="#7d8186"/>
<rect x="1356.1" y="229.5" width="1.8" height="3.2" fill="#7d8186"/>
<polygon points="1362.0,180.4 1366.2,178.7 1366.2,230.0 1362.0,232.4" fill="#3b3f45"/>
<rect x="1363.0" y="188.2" width="1.7" height="3.1" fill="#7d8186"/>
<rect x="1363.0" y="200.7" width="1.7" height="3.1" fill="#7d8186"/>
<rect x="1363.0" y="213.1" width="1.7" height="3.1" fill="#7d8186"/>
<rect x="1363.0" y="225.6" width="1.7" height="3.1" fill="#7d8186"/>
<polygon points="1368.5,177.7 1372.5,176.1 1372.5,226.4 1368.5,228.7" fill="#3b3f45"/>
<rect x="1369.5" y="185.4" width="1.6" height="3.1" fill="#7d8186"/>
<rect x="1369.5" y="197.6" width="1.6" height="3.1" fill="#7d8186"/>
<rect x="1369.5" y="209.8" width="1.6" height="3.1" fill="#7d8186"/>
<rect x="1369.5" y="222.1" width="1.6" height="3.1" fill="#7d8186"/>
<polygon points="1374.5,175.3 1378.3,173.7 1378.3,223.1 1374.5,225.3" fill="#3b3f45"/>
<rect x="1375.5" y="182.8" width="1.5" height="3.0" fill="#7d8186"/>
<rect x="1375.5" y="194.8" width="1.5" height="3.0" fill="#7d8186"/>
<rect x="1375.5" y="206.8" width="1.5" height="3.0" fill="#7d8186"/>
<rect x="1375.5" y="218.8" width="1.5" height="3.0" fill="#7d8186"/>
<line x1="1263.0" y1="244.6" x2="1379.5" y2="185.3" stroke="#f08458" stroke-width="1.3"/>
<line x1="1263.0" y1="271.1" x2="1379.0" y2="201.3" stroke="#f08458" stroke-width="1.3"/>
<line x1="1263.0" y1="296.6" x2="1378.5" y2="216.6" stroke="#f08458" stroke-width="1.3"/>
<line x1="1266.8" y1="216.4" x2="1265.8" y2="319.0" stroke="#6e2c12" stroke-width="0.9" opacity="0.85"/>
<line x1="1277.3" y1="212.1" x2="1276.3" y2="310.8" stroke="#6e2c12" stroke-width="0.9" opacity="0.85"/>
<line x1="1287.3" y1="208.0" x2="1286.3" y2="303.0" stroke="#6e2c12" stroke-width="0.9" opacity="0.85"/>
<line x1="1296.8" y1="204.1" x2="1295.8" y2="295.5" stroke="#6e2c12" stroke-width="0.9" opacity="0.85"/>
<line x1="1305.8" y1="200.4" x2="1304.8" y2="288.5" stroke="#6e2c12" stroke-width="0.9" opacity="0.85"/>
<line x1="1314.8" y1="196.7" x2="1313.8" y2="281.5" stroke="#6e2c12" stroke-width="0.9" opacity="0.85"/>
<line x1="1323.3" y1="193.3" x2="1322.3" y2="274.8" stroke="#6e2c12" stroke-width="0.9" opacity="0.85"/>
<line x1="1331.3" y1="190.0" x2="1330.3" y2="268.5" stroke="#6e2c12" stroke-width="0.9" opacity="0.85"/>
<line x1="1339.3" y1="186.7" x2="1338.3" y2="262.3" stroke="#6e2c12" stroke-width="0.9" opacity="0.85"/>
<line x1="1346.8" y1="183.6" x2="1345.8" y2="256.4" stroke="#6e2c12" stroke-width="0.9" opacity="0.85"/>
<line x1="1353.8" y1="180.7" x2="1352.8" y2="250.9" stroke="#6e2c12" stroke-width="0.9" opacity="0.85"/>
<line x1="1360.8" y1="177.9" x2="1359.8" y2="245.5" stroke="#6e2c12" stroke-width="0.9" opacity="0.85"/>
<line x1="1367.3" y1="175.2" x2="1366.3" y2="240.4" stroke="#6e2c12" stroke-width="0.9" opacity="0.85"/>
<line x1="1373.3" y1="172.7" x2="1372.3" y2="235.7" stroke="#6e2c12" stroke-width="0.9" opacity="0.85"/>
<polygon points="1238.0,256.0 1244.0,254.0 1244.0,330.0 1238.0,333.0" fill="#35373b"/>
<polygon points="1250.0,252.0 1256.0,250.0 1256.0,324.0 1250.0,327.0" fill="#35373b"/>
<polyline points="1233.0,251.0 1263.0,243.0 1263.0,211.0 1357.0,171.0" fill="none" stroke="#6e2c12" stroke-width="1.2"/>
<line x1="1263" y1="211" x2="1263" y2="322" stroke="#6e2c12" stroke-width="1"/>
<polyline points="1357.0,171.0 1384.0,181.0 1380.0,229.0" fill="none" stroke="#6e2c12" stroke-width="1"/>
<polygon points="1042.0,189.0 1208.0,154.0 1300.0,157.0 1300.0,164.0 1181.0,191.0 1181.0,227.0 1263.0,244.0 1233.0,251.0" fill="#b6b7d7"/>
<line x1="1088.2" y1="203.8" x2="1196.6" y2="171.0" stroke="#957474" stroke-width="0.7" stroke-dasharray="2.2 1.6"/>
<line x1="1128.0" y1="216.8" x2="1214.9" y2="183.1" stroke="#957474" stroke-width="0.7" stroke-dasharray="2.2 1.6"/>
<line x1="1167.8" y1="229.8" x2="1233.1" y2="195.2" stroke="#957474" stroke-width="0.7" stroke-dasharray="2.2 1.6"/>
<line x1="1204.0" y1="241.6" x2="1249.7" y2="206.2" stroke="#957474" stroke-width="0.7" stroke-dasharray="2.2 1.6"/>
<line x1="1087.8" y1="183.0" x2="1241.4" y2="240.9" stroke="#957474" stroke-width="0.7" stroke-dasharray="2.2 1.6"/>
<line x1="1122.4" y1="174.4" x2="1249.5" y2="231.2" stroke="#957474" stroke-width="0.7" stroke-dasharray="2.2 1.6"/>
<line x1="1154.4" y1="166.4" x2="1257.0" y2="222.2" stroke="#957474" stroke-width="0.7" stroke-dasharray="2.2 1.6"/>
<ellipse cx="1113" cy="190" rx="1.6" ry="1" fill="#7c7c8a"/>
<ellipse cx="1125" cy="195" rx="1.6" ry="1" fill="#7c7c8a"/>
<ellipse cx="1138" cy="200" rx="1.6" ry="1" fill="#7c7c8a"/>
<ellipse cx="1150" cy="205" rx="1.6" ry="1" fill="#7c7c8a"/>
<ellipse cx="1162" cy="210" rx="1.6" ry="1" fill="#7c7c8a"/>
<ellipse cx="1175" cy="215" rx="1.6" ry="1" fill="#7c7c8a"/>
<ellipse cx="1110" cy="203" rx="1.6" ry="1" fill="#7c7c8a"/>
<ellipse cx="1125" cy="208" rx="1.6" ry="1" fill="#7c7c8a"/>
<ellipse cx="1140" cy="213" rx="1.6" ry="1" fill="#7c7c8a"/>
<ellipse cx="1155" cy="218" rx="1.6" ry="1" fill="#7c7c8a"/>
<ellipse cx="1098" cy="186" rx="1.6" ry="1" fill="#7c7c8a"/>
<ellipse cx="1085" cy="181" rx="1.6" ry="1" fill="#7c7c8a"/>
<polygon points="1096.0,193.0 1140.0,179.0 1142.0,181.0 1098.0,195.0" fill="#333"/>
<polygon points="1146.0,183.0 1181.0,192.0 1181.0,200.0 1146.0,191.0" fill="#f3efcf" stroke="#888" stroke-width="0.4"/>
<polygon points="1039.0,186.0 1208.0,150.0 1211.0,155.0 1044.0,191.0" fill="#f08458" stroke="#6e2c12" stroke-width="0.8"/>
<polyline points="1042.0,189.0 1233.0,251.0" fill="none" stroke="#6e2c12" stroke-width="1.3"/>
<polygon points="1039.0,186.0 1044.0,191.0 1047.0,244.0 1043.0,240.0" fill="#c95f36"/>
<polygon points="1181.0,160.0 1215.0,156.0 1215.0,178.0 1181.0,185.0" fill="#e87548" stroke="#6e2c12" stroke-width="0.6"/>
<polygon points="1215.0,156.0 1235.0,159.0 1235.0,180.0 1215.0,178.0" fill="#d2673e"/>
<polygon points="1221.0,162.0 1229.0,163.0 1229.0,178.0 1221.0,177.0" fill="#3a3a3a"/>
<polygon points="1235.0,159.0 1300.0,161.0 1300.0,172.0 1235.0,182.0" fill="#3a3c40"/>
<rect x="1237" y="165.9" width="2.2" height="8.0" fill="#dcdcdc"/>
<rect x="1243" y="165.6" width="2.2" height="7.7" fill="#dcdcdc"/>
<rect x="1249" y="165.4" width="2.2" height="7.4" fill="#dcdcdc"/>
<rect x="1255" y="165.1" width="2.2" height="7.1" fill="#dcdcdc"/>
<rect x="1261" y="164.8" width="2.2" height="6.8" fill="#dcdcdc"/>
<rect x="1267" y="164.5" width="2.2" height="6.5" fill="#dcdcdc"/>
<rect x="1273" y="164.2" width="2.2" height="6.2" fill="#dcdcdc"/>
<rect x="1279" y="164.0" width="2.2" height="5.9" fill="#dcdcdc"/>
<rect x="1285" y="163.7" width="2.2" height="5.6" fill="#dcdcdc"/>
<rect x="1291" y="163.4" width="2.2" height="5.3" fill="#dcdcdc"/>
<rect x="1297" y="163.1" width="2.2" height="5.0" fill="#dcdcdc"/>
<polygon points="1150.0,178.0 1181.0,170.0 1181.0,191.0 1150.0,186.0" fill="#3a3c40"/>
<rect x="1152" y="178.5" width="1.8" height="8" fill="#d4d4d4"/>
<rect x="1157" y="177.2" width="1.8" height="8" fill="#d4d4d4"/>
<rect x="1162" y="175.9" width="1.8" height="8" fill="#d4d4d4"/>
<rect x="1167" y="174.6" width="1.8" height="8" fill="#d4d4d4"/>
<rect x="1172" y="173.3" width="1.8" height="8" fill="#d4d4d4"/>
<rect x="1177" y="172.0" width="1.8" height="8" fill="#d4d4d4"/>
<polygon points="1208.0,150.0 1300.0,156.0 1370.0,163.0 1370.0,167.0 1300.0,160.0 1211.0,155.0" fill="#f08458" stroke="#6e2c12" stroke-width="0.7"/>
<polygon points="1215.0,156.0 1300.0,159.0 1300.0,162.0 1235.0,160.0" fill="#c4c4dd"/>
<polygon points="1181.0,191.0 1263.0,211.0 1263.0,244.0 1181.0,227.0" fill="#d86a41"/>
<line x1="1181" y1="199" x2="1263" y2="221" stroke="#6e2c12" stroke-width="0.8"/>
<polygon points="1181.0,191.0 1224.0,180.0 1239.0,183.0 1300.0,164.0 1357.0,171.0 1263.0,211.0" fill="#f08458" stroke="#6e2c12" stroke-width="0.8"/>
<polygon points="1204.0,194.0 1237.0,186.5 1300.0,167.5 1353.0,172.5 1262.0,208.5" fill="#b6b7d7"/>
<polygon points="1191.0,218.0 1197.0,216.0 1197.0,229.0 1191.0,229.0" fill="#d9a089" stroke="#777" stroke-width="0.5"/>
<line x1="1243" y1="199" x2="1243" y2="193" stroke="#777" stroke-width="1"/>
<polygon points="1181.0,227.0 1263.0,244.0 1233.0,251.0 1178.0,234.0" fill="#c2c3df"/>
<polyline points="1181.0,191.0 1181.0,227.0 1263.0,244.0" fill="none" stroke="#6e2c12" stroke-width="0.9"/>
<line x1="1207" y1="215" x2="1207" y2="208" stroke="#00f" stroke-width="0.8"/><line x1="1207" y1="215" x2="1203" y2="217" stroke="#f00" stroke-width="0.8"/><line x1="1207" y1="215" x2="1212" y2="216" stroke="#0c0" stroke-width="0.8"/>
<polyline points="1043.0,210.0 1235.0,290.5 1378.0,201.0" fill="none" stroke="#777" stroke-width="3.4"/>
<polyline points="1043.0,210.0 1235.0,290.5 1378.0,201.0" fill="none" stroke="#f2f2f2" stroke-width="2"/>
<polyline points="1044.6,227.6 1235.0,315.0 1376.0,217.0" fill="none" stroke="#777" stroke-width="3.4"/>
<polyline points="1044.6,227.6 1235.0,315.0 1376.0,217.0" fill="none" stroke="#f2f2f2" stroke-width="2"/>
<polygon points="1250.0,297.0 1271.0,287.0 1273.0,292.0 1252.0,302.0" fill="#ddd" stroke="#333" stroke-width="0.9"/>
<polygon points="1344.0,236.0 1360.0,229.0 1362.0,233.0 1346.0,240.0" fill="#ddd" stroke="#333" stroke-width="0.9"/>
<polygon points="1066.0,237.0 1078.0,239.0 1078.0,242.0 1066.0,240.0" fill="#ddd" stroke="#333" stroke-width="0.6"/>
</svg>
</body></html>
